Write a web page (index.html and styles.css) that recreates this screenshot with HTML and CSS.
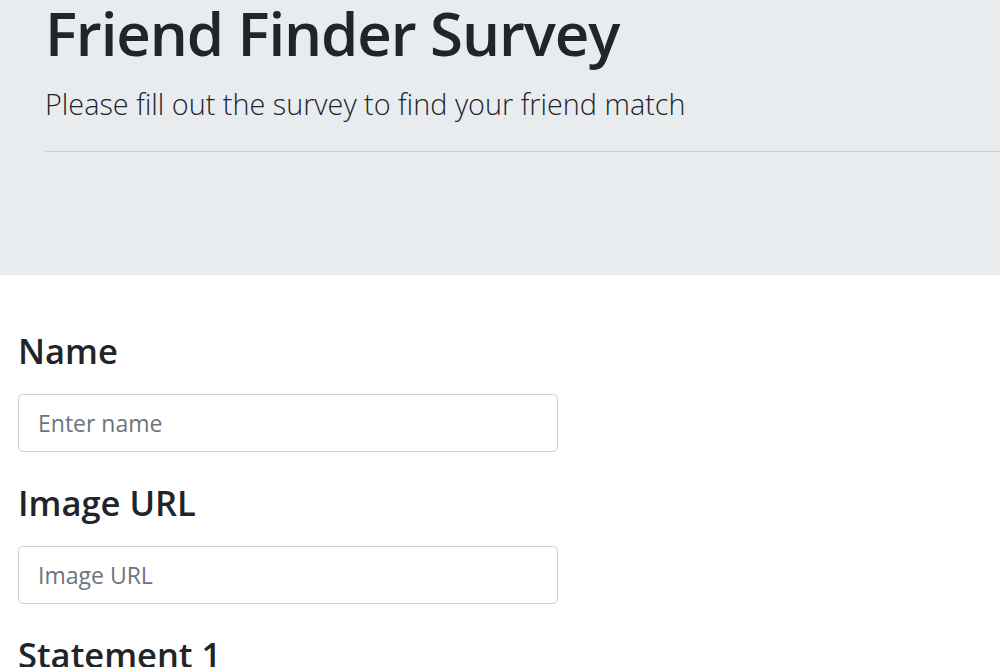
FILE: index.html
```html
<!DOCTYPE html>
<html>
<head>
<meta charset="utf-8">
<link rel="stylesheet" href="styles.css">
</head>
<body>
<header class="jumbotron">
  <h1 class="title">Friend Finder Survey</h1>
  <p class="lead">Please fill out the survey to find your friend match</p>
  <hr class="rule">
</header>
<form class="survey">
  <div class="group">
    <label class="label" for="name">Name</label>
    <input class="field" id="name" type="text" placeholder="Enter name">
  </div>
  <div class="group">
    <label class="label" for="photo">Image URL</label>
    <input class="field" id="photo" type="text" placeholder="Image URL">
  </div>
  <div class="group">
    <label class="label">Statement 1</label>
  </div>
</form>
</body>
</html>
```
FILE: styles.css
```css
html, body {
  margin: 0;
  padding: 0;
  overflow: hidden;
}
body {
  font-family: "Open Sans", "Noto Sans", sans-serif;
  color: #212529;
  background: #fff;
  width: 1000px;
  height: 667px;
}
.jumbotron {
  background: #e9ecef;
  height: 275px;
  padding: 0 0 0 45px;
  box-sizing: border-box;
  overflow: hidden;
}
.title {
  margin: 0;
  padding-top: 0;
  font-size: 60px;
  font-weight: 600;
  line-height: 66px;
  letter-spacing: -1.1px;
}
.lead {
  margin: 20px 0 0 0;
  font-size: 28.8px;
  font-weight: 300;
  line-height: 36px;
}
.rule {
  margin: 29px 0 0 0;
  border: 0;
  border-top: 1px solid rgba(0,0,0,0.12);
}
.survey {
  padding: 0 0 0 18px;
  margin-top: 53px;
}
.group {
  display: flex;
  flex-direction: column;
  align-items: flex-start;
  margin-bottom: 28px;
}
.label {
  font-size: 34.5px;
  font-weight: 600;
  line-height: 46px;
  margin-bottom: 20px;
}
.field {
  width: 540px;
  height: 58px;
  box-sizing: border-box;
  border: 1px solid #c9d0d7;
  border-radius: 5px;
  padding: 0 19px;
  font-family: inherit;
  font-size: 23px;
  color: #495057;
  background: #fff;
  outline: none;
}
.field::placeholder {
  color: #6c757d;
}
```
